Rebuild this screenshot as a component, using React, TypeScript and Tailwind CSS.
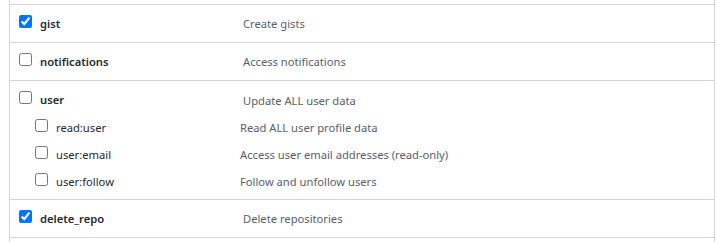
import React from "react";

type Sub = { name: string; desc: string; checked?: boolean };

function Box({ checked }: { checked?: boolean }) {
  return (
    <input
      type="checkbox"
      defaultChecked={checked}
      className="w-[13px] h-[13px] m-0 shrink-0"
    />
  );
}

function TopRow({ name, desc, checked }: { name: string; desc: string; checked?: boolean }) {
  return (
    <div className="flex items-center h-[38px] border-t border-[#d1d5da]">
      <div className="flex items-baseline w-[233px] pl-[9px] gap-[8px]">
        <Box checked={checked} />
        <span className="font-semibold text-[#24292e]">{name}</span>
      </div>
      <div className="text-[#586069] pt-[2px]">{desc}</div>
    </div>
  );
}

function SubRow({ name, desc, checked }: Sub) {
  return (
    <div className="flex items-center h-[27px]">
      <div className="flex items-baseline w-[230px] pl-[25px] gap-[8px]">
        <Box checked={checked} />
        <span className="text-[#24292e]">{name}</span>
      </div>
      <div className="text-[#586069] pt-[2px]">{desc}</div>
    </div>
  );
}

export default function App() {
  const subs: Sub[] = [
    { name: "read:user", desc: "Read ALL user profile data" },
    { name: "user:email", desc: "Access user email addresses (read-only)" },
    { name: "user:follow", desc: "Follow and unfollow users" },
  ];
  return (
    <div
      className="w-[717px] h-[242px] bg-white text-[11.2px] overflow-hidden"
      style={{ fontFamily: '"Noto Sans", "Open Sans", sans-serif' }}
    >
      <div className="ml-[9px] w-[706px] h-[242px] border-x border-[#d1d5da] pt-[4px]">
        <TopRow name="gist" desc="Create gists" checked />
        <TopRow name="notifications" desc="Access notifications" />
        <div className="border-t border-[#d1d5da] pt-[9px] pb-[4px]">
          <div className="flex items-center h-[20px]">
            <div className="flex items-baseline w-[233px] pl-[9px] gap-[8px]">
              <Box />
              <span className="font-semibold text-[#24292e]">user</span>
            </div>
            <div className="text-[#586069] pt-[2px]">Update ALL user data</div>
          </div>
          <div className="pt-[4px]">
            {subs.map((s) => (
              <SubRow key={s.name} {...s} />
            ))}
          </div>
        </div>
        <TopRow name="delete_repo" desc="Delete repositories" checked />
        <div className="border-t border-[#d1d5da]" />
      </div>
    </div>
  );
}
